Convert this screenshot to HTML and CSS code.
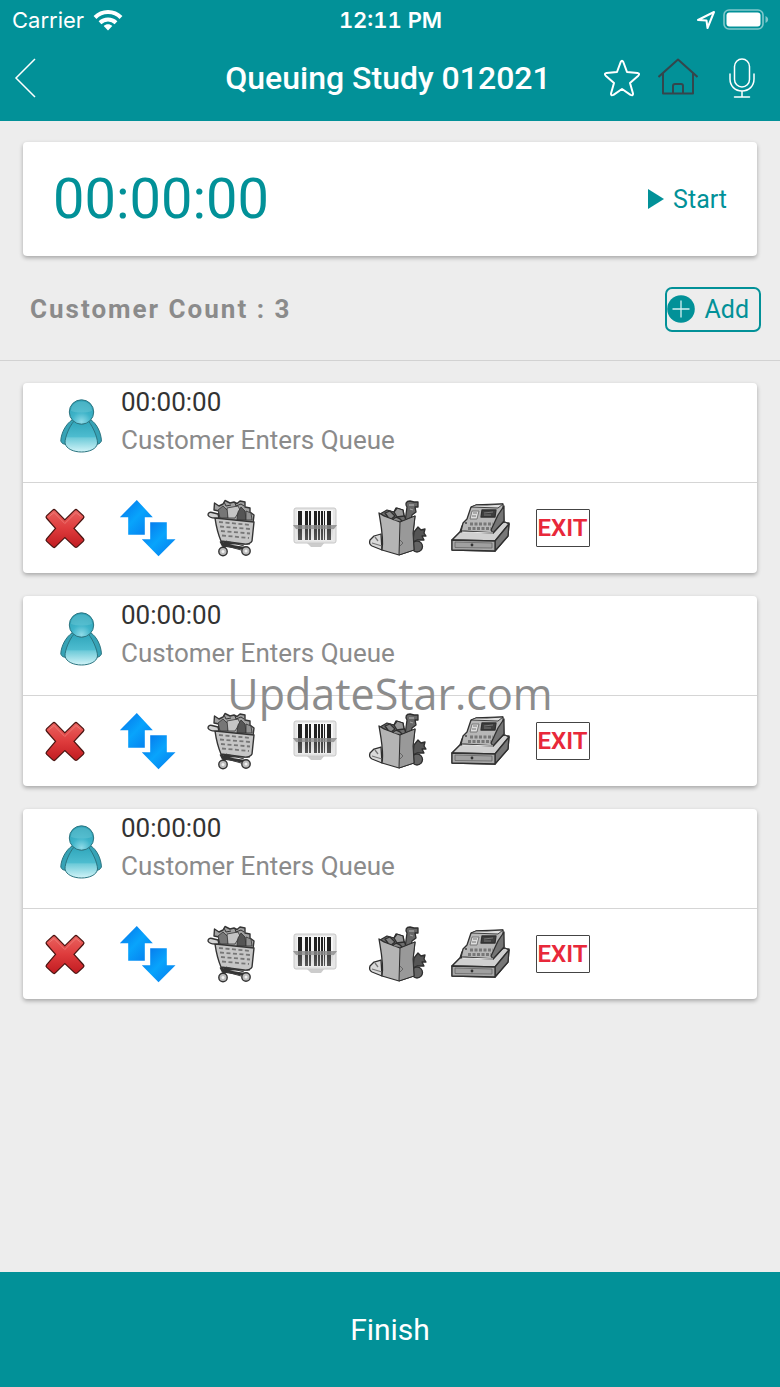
FILE: index.html
```
<!DOCTYPE html>
<html lang="en">
<head>
    <meta charset="UTF-8">
    <meta name="viewport" content="width=device-width, initial-scale=1.0">
    <title>Queuing Study 012021</title>
    <link rel="stylesheet" href="styles.css">
</head>
<body>
    <!-- Shared icons -->
    <svg class="sprite" aria-hidden="true">
        <defs>
            <radialGradient id="headFill" cx="50%" cy="90%" r="80%">
                <stop offset="0" stop-color="#8fdbe8"/>
                <stop offset="0.5" stop-color="#3fb4c9"/>
                <stop offset="1" stop-color="#2fa3b8"/>
            </radialGradient>
            <linearGradient id="bodyFill" x1="0" y1="0" x2="0" y2="1">
                <stop offset="0" stop-color="#2fa5ba"/>
                <stop offset="0.5" stop-color="#4dbccf"/>
                <stop offset="0.55" stop-color="#6fcbd9"/>
                <stop offset="1" stop-color="#d2f4f8"/>
            </linearGradient>
            <linearGradient id="redFill" x1="0" y1="0" x2="0" y2="1">
                <stop offset="0" stop-color="#e85f5c"/>
                <stop offset="0.5" stop-color="#de3b3c"/>
                <stop offset="1" stop-color="#c41f24"/>
            </linearGradient>
            <linearGradient id="blueFill" x1="0" y1="0" x2="1" y2="1">
                <stop offset="0" stop-color="#0670e8"/>
                <stop offset="0.5" stop-color="#08a4fc"/>
                <stop offset="1" stop-color="#0678ec"/>
            </linearGradient>
            <linearGradient id="scanFill" x1="0" y1="0" x2="0" y2="1">
                <stop offset="0" stop-color="#777777"/>
                <stop offset="1" stop-color="#dddddd"/>
            </linearGradient>
        </defs>

        <symbol id="person" viewBox="0 0 42 54">
            <g stroke="#2b7480" stroke-width="1">
                <path d="M12 21C6 25 1 34 0.8 42C1.5 44.500 4 45.500 7 45.500L15 23Z" fill="#36a3b6"/>
                <path d="M31 21C37 25 41.200 34 41.400 42C40.500 44.500 38 45.500 35 45.500L27 23Z" fill="#36a3b6"/>
                <path d="M14 22C9 28 5 38 5 44C6 50 14 53 21.500 53C29 53 37 50 37.500 44C37.500 38 33 28 28.500 22C24 26 19 26 14 22Z" fill="url(#bodyFill)"/>
                <circle cx="21.500" cy="13" r="12.200" fill="url(#headFill)"/>
            </g>
            <path d="M11 12C11 5 16 2.500 21.500 2.500S32 5 32 12C26 14 17 14 11 12Z" fill="#7fd0dd" opacity="0.35"/>
        </symbol>

        <symbol id="remove" viewBox="0 0 60 60">
            <path d="M13 19L19 13.500L29.800 24.500L41 13.500L47 19L36.500 30.300L47 42L41 47.500L29.800 37L19 47.500L13 42L23 30.300Z" fill="#4a1512" stroke="#4a1512" stroke-width="5" stroke-linejoin="round"/>
            <path d="M13 19L19 13.500L29.800 24.500L41 13.500L47 19L36.500 30.300L47 42L41 47.500L29.800 37L19 47.500L13 42L23 30.300Z" fill="url(#redFill)" stroke="url(#redFill)" stroke-width="2.500" stroke-linejoin="round"/>
            <path d="M13.500 19L19 14.500L29.800 25.500L41 14.500L46 18.500" fill="none" stroke="#f69a92" stroke-width="1" opacity="0.5"/>
        </symbol>

        <symbol id="swap" viewBox="0 0 60 60">
            <path d="M18.800 2L34.800 19.300H26.800V36.700H10.200V19.300H1.800Z" fill="url(#blueFill)"/>
            <path d="M32.200 24.300H48.800V41.300H57.500L40.500 58.300L23.800 41.300H32.200Z" fill="url(#blueFill)"/>
        </symbol>

        <symbol id="cart" viewBox="0 0 60 60">
            <g stroke="#343434" stroke-width="1.400" stroke-linejoin="round">
                <path d="M17 21L18 13L13 12L13.500 5L18 8L22 6L24 2.500L29 5L33 4L36 5.500L39 3L44 4L44 9L49 10L49 14L53 17L52 25Z" fill="#a2a2a2"/>
                <path d="M17 12L22 8L27 13V20H19Z" fill="#767676" stroke-width="0.8"/>
                <path d="M26 10L37 8L39 12L34 20H27Z" fill="#c4c4c4" stroke-width="0.8"/>
                <path d="M37 14L40 9L44 13L45 22H36Z" fill="#555555" stroke-width="0.8"/>
                <path d="M45 13L50 15L51 22L45 22Z" fill="#919191" stroke-width="0.8"/>
                <path d="M23 4L25 8L30 7M34 5L35 8L40 6L43 8" fill="none" stroke-width="1"/>
                <path d="M20 43L22 47L41 50L45 51M49 45L24 45L22 52" fill="none" stroke-width="3.200"/>
                <path d="M14 20L53 24L51 43C50 45.500 46 46.500 43 46L20 43C17 36 15 27 14 20Z" fill="#c6c6c6"/>
                <path d="M14 20C11 20 8 19 7 17C7 14.500 9 14 11 14.500L17 16L18 20Z" fill="#d2d2d2"/>
                <circle cx="22" cy="53.500" r="4.200" fill="#bcbcbc"/>
                <circle cx="45" cy="53" r="4.200" fill="#bcbcbc"/>
            </g>
            <g fill="none" stroke="#777777" stroke-width="1.800" stroke-dasharray="4 2.500">
                <path d="M18 24L50 27"/>
                <path d="M19 28.500L49 31"/>
                <path d="M20 33L49 35.500"/>
                <path d="M21 37.500L48 40"/>
            </g>
            <path d="M26 48L40 52M25 43L43 48" stroke="#3d3d3d" stroke-width="1"/>
            <circle cx="22" cy="53.500" r="1.500" fill="#f0f0f0"/>
            <circle cx="45" cy="53" r="1.500" fill="#f0f0f0"/>
        </symbol>

        <symbol id="barcode" viewBox="0 0 60 60">
            <path d="M22 44H41L37 49H27Z" fill="#cccccc"/>
            <rect x="10" y="10" width="42" height="35" rx="2" fill="#e6e6e6" stroke="#c8c8c8"/>
            <rect x="13" y="12" width="36" height="31" fill="#f6f6f6"/>
            <g fill="#202020">
                <rect x="14" y="13" width="4" height="29"/>
                <rect x="21" y="13" width="3" height="29"/>
                <rect x="25" y="13" width="2" height="29"/>
                <rect x="30" y="13" width="3" height="29"/>
                <rect x="34" y="13" width="2" height="29"/>
                <rect x="37" y="13" width="2" height="29"/>
                <rect x="40" y="13" width="1" height="29"/>
                <rect x="43" y="13" width="4" height="29"/>
            </g>
            <path d="M9 27H53L49 32V44H13V32Z" fill="url(#scanFill)" opacity="0.3"/>
            <path d="M9 27H53L50 31H12Z" fill="#8c8c8c" opacity="0.75"/>
        </symbol>

        <symbol id="bag" viewBox="0 0 60 60">
            <g stroke="#2e2e2e" stroke-width="1.300" stroke-linejoin="round">
                <path d="M14 36L7 38L3 42C2 45 3 47 5 48L15 52Z" fill="#dadada"/>
                <path d="M5 45L15 48M8 39L11 43" fill="none" stroke="#777777"/>
                <path d="M47 34L51 29L54 32L58 31L57 35L59 38L55 38L57 42L50 42L46 44Z" fill="#555555"/>
                <circle cx="50" cy="48.500" r="5.500" fill="#656565"/>
                <path d="M38 24L40 9C38 6 39 3 43 3L47 4L51 4L51 9L48 9L49 14L45 17L43 28Z" fill="#676767"/>
                <path d="M42 7L47 7M43 11L46 12" fill="none" stroke="#a1a1a1"/>
                <path d="M13 16L20 12L27 14L29 10L36 12L37 17L39 22L33 25Z" fill="#6d6d6d"/>
                <path d="M27 14L30 10L36 12L37 18L30 19Z" fill="#979797"/>
                <path d="M18 15L23 13L28 18L23 22Z" fill="#858585"/>
                <path d="M12 15L17 18L33 24L48 18L46 35L47 52L32 57L15 52C17 40 14 27 12 15Z" fill="#b4b4b4"/>
                <path d="M33 24L48 18L46 35L47 52L32 57Z" fill="#999999" stroke-width="1"/>
                <path d="M26 22C28 18 32 19 35 23" fill="#8a8a8a"/>
            </g>
            <path d="M33 42L36 45L33 48" fill="none" stroke="#666666"/>
        </symbol>

        <symbol id="register" viewBox="0 0 60 60">
            <g stroke="#303030" stroke-width="1.300" stroke-linejoin="round">
                <path d="M2 42L10 34L12 28L59 25L58 38L45 53L2 52Z" fill="#9b9b9b"/>
                <path d="M2 42L10 34L55 24L59 26L45 43Z" fill="#d0d0d0"/>
                <path d="M45 43L59 26L58 38L45 53Z" fill="#777777"/>
                <path d="M2 42L45 43V53L2 52Z" fill="#a9a9a9"/>
                <path d="M11 33L13 25L17 21L21 9L26 7L53 6L54 23L43 35Z" fill="#b7b7b7"/>
                <path d="M48 17L54 8V23L43 35L41 32Z" fill="#747474"/>
                <path d="M21 9L26 7L37 7L53 6L48 10Z" fill="#dedede" stroke-width="0.9"/>
                <path d="M32 12H46L45 19H31Z" fill="#3e3e3e"/>
                <path d="M22 13H29L27 21H20Z" fill="#dddddd" stroke="#777777" stroke-width="1"/>
                <path d="M5 44L42 45V50L5 49.500Z" fill="#a0a0a0" stroke="#666666" stroke-width="0.8"/>
            </g>
            <path d="M23 15H27M22 18H26M34 15L43 14M34 17H41" stroke="#777777" stroke-width="1"/>
            <g fill="none" stroke="#777777" stroke-width="3" stroke-dasharray="3 1.500">
                <path d="M20 26H43"/>
                <path d="M18 30.500H41"/>
            </g>
            <path d="M12 34L43 35" stroke="#e9e9e9" stroke-width="1"/>
            <circle cx="16" cy="25" r="1" fill="#444444"/>
            <circle cx="22" cy="47" r="1.400" fill="#333333"/>
        </symbol>
    </svg>

    <header class="header">
        <div class="status-bar">
            <div class="carrier">
                <span>Carrier</span>
                <svg width="30" height="22" viewBox="0 0 30 22" fill="none" stroke="#fff" stroke-width="4">
                    <path d="M2 8.500C9 1.300 21 1.300 28 8.500"/>
                    <path d="M7 13.700C11.500 9.500 18.500 9.500 23 13.700"/>
                    <path d="M10.700 17C13 14.500 17 14.500 19.300 17L15 21.500Z" fill="#fff" stroke="none"/>
                </svg>
            </div>
            <span class="clock">12:11 PM</span>
            <div class="indicators">
                <svg width="20" height="20" viewBox="0 0 20 20" fill="none" stroke="#fff" stroke-width="2" stroke-linejoin="round">
                    <path d="M2 10L18 2L11.500 18L10.500 10.500Z"/>
                </svg>
                <svg width="46" height="22" viewBox="0 0 46 22">
                    <rect x="1" y="1" width="39" height="19" rx="5" fill="none" stroke="#fff" stroke-width="1.600" opacity="0.5"/>
                    <rect x="3.500" y="3.500" width="34" height="14" rx="3" fill="#fff"/>
                    <path d="M42.500 7C46 8.500 46 12.500 42.500 14Z" fill="#fff" opacity="0.5"/>
                </svg>
            </div>
        </div>
        <div class="nav-bar">
            <button type="button" class="icon-button back" aria-label="Back">
                <svg width="24" height="40" viewBox="0 0 24 40" fill="none" stroke="#fff" stroke-width="1.500">
                    <path d="M21 1L2 20L21 39"/>
                </svg>
            </button>
            <h1>Queuing Study 012021</h1>
            <div class="nav-actions">
                <button type="button" class="icon-button" aria-label="Favourite">
                    <svg width="40" height="40" viewBox="0 0 40 40" fill="none" stroke="#fff" stroke-width="2" stroke-linejoin="round">
                        <path d="M18.700 4Q20 1.500 21.300 4L25 14L35.500 15Q38.500 15.500 36 18L28 25L31 35.500Q31.300 38 28.500 36.800L20 31L11.500 36.800Q8.700 38 9 35.500L12 25L4 18Q1.500 15.500 4.500 15L15 14Z"/>
                    </svg>
                </button>
                <button type="button" class="icon-button" aria-label="Home">
                    <svg width="40" height="40" viewBox="0 0 40 40" fill="none" stroke="#34464c" stroke-width="2" stroke-linejoin="round">
                        <path d="M0.500 19L20 1.500L39.500 19M5 15.500V35.500H35V15.500M15 35.500V28Q15 26 17 26H23Q25 26 25 28V35.500"/>
                    </svg>
                </button>
                <button type="button" class="icon-button mic" aria-label="Voice input">
                    <svg width="40" height="40" viewBox="0 0 40 40" fill="none" stroke="#fff" stroke-width="1.500" stroke-linecap="round">
                        <rect x="12.500" y="1" width="15" height="28" rx="7.500"/>
                        <path d="M8 16V21C8 28 13 33 20 33S32 28 32 21V16M20 33V39M12.500 39H27.500"/>
                    </svg>
                </button>
            </div>
        </div>
    </header>

    <main class="content">
        <section class="card timer">
            <span class="timer-value">00:00:00</span>
            <button type="button" class="start-button">
                <svg width="16" height="20" viewBox="0 0 16 20"><path d="M0 0L16 10L0 20Z" fill="currentColor"/></svg>
                Start
            </button>
        </section>

        <div class="count-row">
            <h2>Customer Count : 3</h2>
            <button type="button" class="add-button">
                <svg width="28" height="28" viewBox="0 0 28 28">
                    <circle cx="14" cy="14" r="13.800" fill="currentColor"/>
                    <path d="M5.500 14H22.500M14 5.500V22.500" stroke="#d5f0f1" stroke-width="1.300"/>
                </svg>
                Add
            </button>
        </div>

        <div class="customers">
            <article class="card">
                <div class="customer">
                    <svg class="avatar" width="42" height="54"><use href="#person"/></svg>
                    <div>
                        <p class="time">00:00:00</p>
                        <p class="event">Customer Enters Queue</p>
                    </div>
                </div>
                <div class="actions">
                    <button type="button" aria-label="Remove"><svg><use href="#remove"/></svg></button>
                    <button type="button" aria-label="Switch queue"><svg><use href="#swap"/></svg></button>
                    <button type="button" aria-label="Cart"><svg><use href="#cart"/></svg></button>
                    <button type="button" aria-label="Scan"><svg><use href="#barcode"/></svg></button>
                    <button type="button" aria-label="Bag"><svg><use href="#bag"/></svg></button>
                    <button type="button" aria-label="Pay"><svg><use href="#register"/></svg></button>
                    <button type="button"><span class="exit">EXIT</span></button>
                </div>
            </article>

            <article class="card">
                <div class="customer">
                    <svg class="avatar" width="42" height="54"><use href="#person"/></svg>
                    <div>
                        <p class="time">00:00:00</p>
                        <p class="event">Customer Enters Queue</p>
                    </div>
                </div>
                <div class="actions">
                    <button type="button" aria-label="Remove"><svg><use href="#remove"/></svg></button>
                    <button type="button" aria-label="Switch queue"><svg><use href="#swap"/></svg></button>
                    <button type="button" aria-label="Cart"><svg><use href="#cart"/></svg></button>
                    <button type="button" aria-label="Scan"><svg><use href="#barcode"/></svg></button>
                    <button type="button" aria-label="Bag"><svg><use href="#bag"/></svg></button>
                    <button type="button" aria-label="Pay"><svg><use href="#register"/></svg></button>
                    <button type="button"><span class="exit">EXIT</span></button>
                </div>
            </article>

            <article class="card">
                <div class="customer">
                    <svg class="avatar" width="42" height="54"><use href="#person"/></svg>
                    <div>
                        <p class="time">00:00:00</p>
                        <p class="event">Customer Enters Queue</p>
                    </div>
                </div>
                <div class="actions">
                    <button type="button" aria-label="Remove"><svg><use href="#remove"/></svg></button>
                    <button type="button" aria-label="Switch queue"><svg><use href="#swap"/></svg></button>
                    <button type="button" aria-label="Cart"><svg><use href="#cart"/></svg></button>
                    <button type="button" aria-label="Scan"><svg><use href="#barcode"/></svg></button>
                    <button type="button" aria-label="Bag"><svg><use href="#bag"/></svg></button>
                    <button type="button" aria-label="Pay"><svg><use href="#register"/></svg></button>
                    <button type="button"><span class="exit">EXIT</span></button>
                </div>
            </article>
        </div>
    </main>

    <button type="button" class="finish-button">Finish</button>

    <div class="watermark">UpdateStar.com</div>
</body>
</html>
```
FILE: styles.css
```
* {
    box-sizing: border-box;
}

body {
    position: relative;
    display: flex;
    flex-direction: column;
    min-height: 100vh;
    margin: 0;
    background-color: #ededed;
    font-family: Roboto, sans-serif;
}

h1,
h2,
p {
    margin: 0;
}

svg {
    display: block;
}

button {
    padding: 0;
    border: none;
    background: none;
    font-family: inherit;
    cursor: pointer;
}

.sprite {
    width: 0;
    height: 0;
}

/* Header */
.header {
    background-color: #029198;
    color: #fff;
}

.status-bar {
    display: grid;
    grid-template-columns: 1fr auto 1fr;
    align-items: center;
    height: 39px;
    padding: 0 11px 0 12px;
    font-family: Inter, sans-serif;
    font-size: 22px;
}

.carrier {
    display: flex;
    align-items: center;
    gap: 9px;
}

.clock {
    font-weight: 600;
    font-variant-numeric: tabular-nums;
}

.indicators {
    display: flex;
    align-items: center;
    justify-content: flex-end;
    gap: 7px;
}

.nav-bar {
    display: grid;
    grid-template-columns: 1fr auto 1fr;
    align-items: center;
    height: 82px;
    padding: 0 18px 4px 14px;
}

.nav-bar h1 {
    font-size: 32px;
    font-weight: 500;
}

.icon-button.back {
    justify-self: start;
}

.nav-actions {
    display: flex;
    justify-content: flex-end;
    gap: 16px;
}

.icon-button.mic {
    margin-left: 8px;
}

/* Content */
.content {
    flex: 1;
    padding: 21px 0;
}

.card {
    margin: 0 23px;
    background-color: #fff;
    border-radius: 4px;
    box-shadow: 0 2px 4px rgba(0, 0, 0, 0.3);
}

.timer {
    display: flex;
    align-items: center;
    justify-content: space-between;
    height: 114px;
    padding: 0 30px;
    color: #029198;
}

.timer-value {
    font-size: 56px;
}

.start-button {
    display: flex;
    align-items: center;
    gap: 9px;
    color: #029198;
    font-size: 25px;
}

.count-row {
    display: flex;
    align-items: center;
    justify-content: space-between;
    height: 105px;
    padding: 2px 19px 0 30px;
    border-bottom: 1px solid #d2d2d2;
}

.count-row h2 {
    color: #8b8b8b;
    font-size: 26px;
    letter-spacing: 2px;
}

.add-button {
    display: flex;
    align-items: center;
    gap: 9px;
    height: 45px;
    padding: 0 10px 0 0;
    border: 2px solid #029198;
    border-radius: 7px;
    color: #029198;
    font-size: 25px;
}

.customers {
    display: flex;
    flex-direction: column;
    gap: 23px;
    padding-top: 22px;
}

.customer {
    display: flex;
    gap: 19px;
    height: 100px;
    padding-left: 37px;
    border-bottom: 1px solid #d5d5d5;
}

.avatar {
    margin-top: 16px;
}

.time,
.event {
    font-size: 26px;
    line-height: 38px;
}

.time {
    color: #333;
}

.event {
    color: #8b8b8b;
}

.actions {
    display: flex;
    flex-wrap: wrap;
}

.actions button {
    display: flex;
    align-items: center;
    justify-content: center;
    width: 83px;
    height: 90px;
}

.actions svg {
    width: 60px;
    height: 60px;
}

.exit {
    width: 54px;
    border: 1px solid #444;
    border-radius: 1px;
    color: #e8283a;
    font-size: 24px;
    font-weight: 600;
    line-height: 36px;
}

.finish-button {
    height: 115px;
    background-color: #029198;
    color: #fff;
    font-size: 30px;
}

.watermark {
    position: absolute;
    inset: 0;
    display: flex;
    align-items: center;
    justify-content: center;
    color: #8c8c8c;
    font-family: "Open Sans", sans-serif;
    font-size: 43px;
    pointer-events: none;
}
```
